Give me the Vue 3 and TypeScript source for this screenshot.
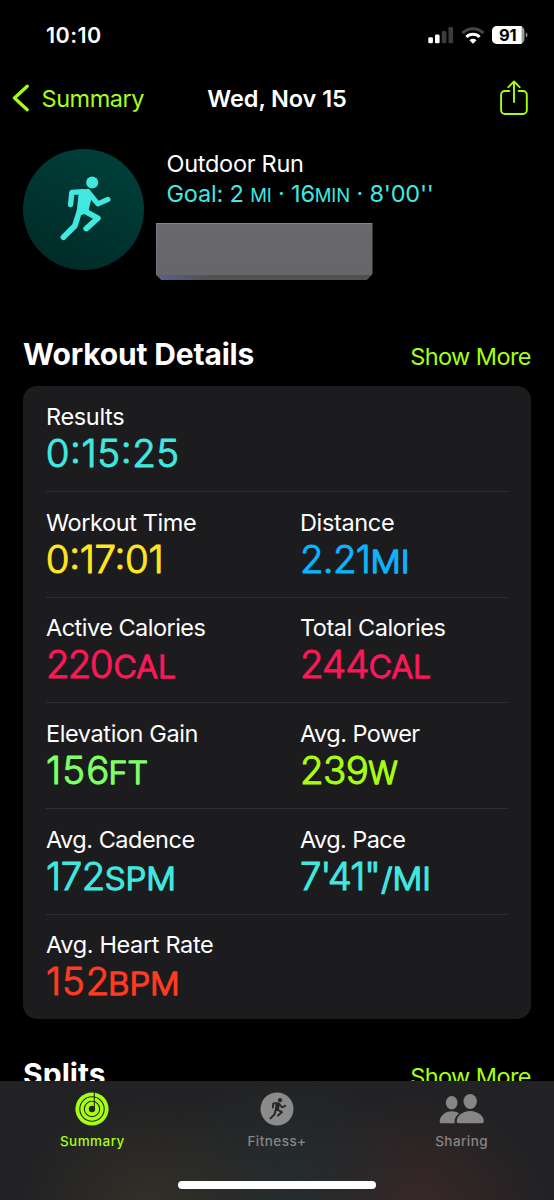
<script setup lang="ts">
interface Metric {
  label: string
  num: string
  numX: number
  numLen: number
  unit?: string
  unitX?: number
  unitLen?: number
  color: string
  spacing: number
}

const rows: Metric[][] = [
  [{ label: 'Results', num: '0:15:25', numX: -0.3, numLen: 133.5, color: '#40e8e0', spacing: -0.35 }],
  [
    { label: 'Workout Time', num: '0:17:01', numX: -0.3, numLen: 118, color: '#ffe620', spacing: -0.4 },
    { label: 'Distance', num: '2.21', numX: 0, numLen: 71, unit: 'MI', unitX: 70.5, unitLen: 39, color: '#0ab4ff', spacing: -0.35 },
  ],
  [
    { label: 'Active Calories', num: '220', numX: 0, numLen: 67.5, unit: 'CAL', unitX: 67.5, unitLen: 62.5, color: '#fa1858', spacing: -0.52 },
    { label: 'Total Calories', num: '244', numX: 0, numLen: 69.5, unit: 'CAL', unitX: 68.7, unitLen: 62.3, color: '#fa1858', spacing: -0.46 },
  ],
  [
    { label: 'Elevation Gain', num: '156', numX: 0, numLen: 63.5, unit: 'FT', unitX: 62.5, unitLen: 39.5, color: '#80ff68', spacing: -0.4 },
    { label: 'Avg. Power', num: '239', numX: 0, numLen: 69, unit: 'W', unitX: 68.3, unitLen: 29.5, color: '#a6ff10', spacing: -0.54 },
  ],
  [
    { label: 'Avg. Cadence', num: '172', numX: 0, numLen: 59.5, unit: 'SPM', unitX: 58.7, unitLen: 71.3, color: '#40e8e0', spacing: -0.5 },
    { label: 'Avg. Pace', num: '7\'41"', numX: 0, numLen: 81, unit: '/MI', unitX: 81, unitLen: 50, color: '#40e8e0', spacing: -0.58 },
  ],
  [{ label: 'Avg. Heart Rate', num: '152', numX: 0, numLen: 63.5, unit: 'BPM', unitX: 62, unitLen: 71.8, color: '#ff3b20', spacing: -0.35 }],
]
</script>

<template>
  <div class="screen">
    <header class="status">
      <span class="clock">10:10</span>
      <div class="indicators">
        <svg class="signal" viewBox="0 0 26 17" width="26" height="17">
          <rect x="0.3" y="10.2" width="4.6" height="6.1" rx="1.3" fill="#fff" />
          <rect x="7" y="7.6" width="4.6" height="8.7" rx="1.3" fill="#fff" />
          <rect x="13.8" y="4" width="4.6" height="12.3" rx="1.3" fill="#3c3c3c" />
          <rect x="20.5" y="0" width="4.6" height="16.3" rx="1.3" fill="#3c3c3c" />
        </svg>
        <svg class="wifi" viewBox="0 0 24 17" width="24" height="17" fill="none" stroke-width="3.1">
          <path d="M1.5 6.1a15 15 0 0 1 21 0" stroke="#444" />
          <path d="M5.4 10a9.4 9.4 0 0 1 13.2 0" stroke="#fff" />
          <path d="M12 16.8l-3.5-3.5a5 5 0 0 1 7 0z" fill="#fff" />
        </svg>
        <svg class="battery" viewBox="0 0 36 18" width="36" height="18">
          <rect x="0" y="0" width="32.5" height="18" rx="5" fill="#999" />
          <path d="M5 0H29.6V18H5a5 5 0 0 1-5-5V5a5 5 0 0 1 5-5z" fill="#fff" />
          <path d="M33.8 6.5c2.2.8 2.2 4.2 0 5z" fill="#999" />
          <text x="15.7" y="14.8" text-anchor="middle" class="battery-text">91</text>
        </svg>
      </div>
    </header>

    <nav class="nav">
      <div class="back">
        <svg viewBox="0 0 18 28" width="18" height="28">
          <path d="M15.2 2.2L2.5 14l12.7 11.7" fill="none" stroke="#a6ff10" stroke-width="3.3" stroke-linecap="round" stroke-linejoin="round" />
        </svg>
        <span>Summary</span>
      </div>
      <h1>Wed, Nov 15</h1>
      <svg class="share" viewBox="0 0 28 36" width="28" height="36" fill="none" stroke="#a6ff10" stroke-width="1.9" stroke-linecap="round" stroke-linejoin="round">
        <path d="M9.3 11H4.8a3.7 3.7 0 0 0-3.7 3.7v15.6A3.7 3.7 0 0 0 4.8 34h18.3a3.7 3.7 0 0 0 3.7-3.7V14.7a3.7 3.7 0 0 0-3.7-3.7H18.6" />
        <path d="M14 22V1.5M8.3 7.2L14 1.5l5.7 5.7" />
      </svg>
    </nav>

    <section class="workout">
      <svg class="avatar" viewBox="69 43 362 362" width="121" height="121">
        <defs>
          <linearGradient id="disc" x1="0.8" y1="0" x2="0.3" y2="1">
            <stop offset="0" stop-color="#00403b" />
            <stop offset="1" stop-color="#002b28" />
          </linearGradient>
        </defs>
        <circle cx="250" cy="224" r="181" fill="url(#disc)" />
        <g fill="none" stroke="#40e8e0" stroke-linecap="round" stroke-linejoin="round">
          <circle cx="276" cy="143" r="18" fill="#40e8e0" stroke="none" />
          <path d="M211.5 209L215 173l35-2" stroke-width="16" />
          <path d="M266 174l27 33 30-13" stroke-width="15.5" />
          <path d="M252 228l41 22-35 31" stroke-width="17" />
          <path d="M237 232l-13 41-34 34" stroke-width="17" />
          <path d="M243 171l21-1 3 18-9 40-22 8z" stroke-width="14" fill="#40e8e0" />
        </g>
      </svg>
      <div class="workout-info">
        <h2>Outdoor Run</h2>
        <p class="goal">Goal: 2 <small>MI</small> · 16<small>MIN</small> · 8'00''</p>
        <div class="redacted"></div>
      </div>
    </section>

    <div class="section-head">
      <h3>Workout Details</h3>
      <span class="more">Show More</span>
    </div>

    <section class="card">
      <div v-for="(row, i) in rows" :key="i" class="row">
        <div v-for="m in row" :key="m.label" class="metric">
          <span class="label" :style="{ letterSpacing: m.spacing + 'px' }">{{ m.label }}</span>
          <svg class="value" width="208" height="44" viewBox="0 0 208 44" :fill="m.color" :stroke="m.color">
            <text class="num" :x="m.numX" y="36" :textLength="m.numLen">{{ m.num }}</text>
            <text v-if="m.unit" class="unit" :x="m.unitX" y="36" :textLength="m.unitLen" lengthAdjust="spacingAndGlyphs">{{ m.unit }}</text>
          </svg>
        </div>
      </div>
    </section>

    <div class="section-head splits">
      <h3>Splits</h3>
      <span class="more">Show More</span>
    </div>

    <footer class="tabbar">
      <div class="tab active">
        <svg viewBox="0 0 34 34" width="34" height="34" fill="none">
          <circle cx="17" cy="17" r="16.6" fill="#a6ff10" />
          <g stroke="#25271f" stroke-width="1.1">
            <circle cx="17" cy="17" r="12.2" />
            <circle cx="17" cy="17" r="7.7" />
          </g>
          <circle cx="17" cy="17" r="3.2" fill="#25271f" />
          <path d="M19.3 0V16" stroke="#25271f" stroke-width="1.1" />
        </svg>
        <span>Summary</span>
      </div>
      <div class="tab">
        <svg viewBox="0 0 34 34" width="34" height="34" fill="none">
          <circle cx="17" cy="17" r="16.5" fill="#8b8b8c" />
          <g transform="translate(-10.6 -7.7) scale(0.111)" stroke="#252728" stroke-linecap="round" stroke-linejoin="round">
            <circle cx="276" cy="143" r="19" fill="#252728" stroke="none" />
            <path d="M211.5 209L215 173l35-2" stroke-width="17" />
            <path d="M266 174l27 33 30-13" stroke-width="17" />
            <path d="M252 228l41 22-35 31" stroke-width="18" />
            <path d="M237 232l-13 41-34 34" stroke-width="18" />
            <path d="M243 171l21-1 3 18-9 40-22 8z" stroke-width="14" fill="#252728" />
          </g>
        </svg>
        <span>Fitness+</span>
      </div>
      <div class="tab">
        <svg viewBox="0 0 46 34" width="46" height="34" fill="#868687">
          <ellipse cx="12.7" cy="10.8" rx="5.9" ry="6.7" />
          <ellipse cx="31.2" cy="9.5" rx="6.7" ry="7.4" />
          <path d="M.7 29.5C.7 24.2 6 19.2 12.7 19.2c3 0 5.4.9 7.3 2.3-2.9 2.2-4.5 5.3-4.5 8.1 0 .8.2 1.3.5 1.7H2.3C1.2 31.3.7 30.700.7 29.500z" />
          <path d="M17.7 29.3c0-5 5.6-10.2 13.5-10.2s13.6 5.2 13.6 10.2c0 1.3-.6 2-1.900 2H19.600c-1.300 0-1.900-.7-1.900-2z" />
        </svg>
        <span>Sharing</span>
      </div>
      <div class="home"></div>
    </footer>
  </div>
</template>

<style>
body {
  margin: 0;
  background: #000;
}
</style>

<style scoped>
.screen {
  position: relative;
  display: flex;
  flex-direction: column;
  width: 554px;
  height: 1200px;
  overflow: hidden;
  background: #000;
  color: #fff;
  font-family: Inter, "Liberation Sans", sans-serif;
}
h1, h2, h3, p {
  margin: 0;
}
svg {
  display: block;
  flex: none;
}
.status {
  display: flex;
  justify-content: space-between;
  align-items: center;
  height: 70px;
  padding: 0 26px 0 46px;
}
.clock {
  font-size: 21.5px;
  font-weight: 600;
  letter-spacing: 0.45px;
}
.indicators {
  display: flex;
  align-items: center;
}
.wifi {
  margin: 0 7px;
}
.battery-text {
  font-size: 16.5px;
  font-weight: 700;
  fill: #000;
  letter-spacing: -0.2px;
}
.nav {
  display: grid;
  grid-template-columns: 1fr auto 1fr;
  align-items: center;
  height: 56px;
}
.back {
  display: flex;
  align-items: center;
  gap: 11.5px;
  margin-left: 12px;
  color: #a6ff10;
  font-size: 23.5px;
  letter-spacing: -0.45px;
}
.nav h1 {
  font-size: 23.5px;
  font-weight: 600;
  letter-spacing: -0.1px;
}
.share {
  justify-self: end;
  margin-right: 26px;
}
.workout {
  display: flex;
  height: 204px;
  padding: 23px 0 0 23px;
  box-sizing: border-box;
}
.workout-info {
  padding-left: 22.5px;
}
.workout-info h2 {
  font-size: 23.5px;
  font-weight: 400;
  line-height: 30px;
  letter-spacing: -0.28px;
}
.goal {
  color: #40e8e0;
  font-size: 23.5px;
  line-height: 29px;
  letter-spacing: -0.17px;
  white-space: nowrap;
}
.goal small {
  font-size: 18.5px;
}
.redacted {
  width: 217px;
  height: 57px;
  margin: 13px 0 0 -11px;
  box-sizing: border-box;
  border-top: 1px solid #858587;
  border-left: 1px solid #77778c;
  background:
    linear-gradient(90deg, #59618f 0, rgba(80, 80, 84, 0) 25%) 0 100% / 100% 5px no-repeat,
    linear-gradient(#505052, #505052) 0 100% / 100% 5px no-repeat,
    linear-gradient(#69696b, #666668);
  clip-path: polygon(0 0, 100% 0, 100% 51px, calc(100% - 6px) 100%, 6px 100%, 0 51px);
}
.section-head {
  display: flex;
  justify-content: space-between;
  align-items: baseline;
  height: 55.5px;
  padding: 6px 23px 0;
  box-sizing: border-box;
}
.section-head h3 {
  font-size: 30px;
  font-weight: 700;
  line-height: 36px;
  letter-spacing: -0.17px;
}
.section-head.splits h3 {
  letter-spacing: 0.05px;
}
.more {
  color: #a6ff10;
  font-size: 23.5px;
  letter-spacing: -0.57px;
}
.card {
  margin: 0 23px;
  border-radius: 14px;
  background: #1c1c1e;
}
.row {
  display: grid;
  grid-template-columns: 254px 208px;
  height: 105.65px;
  margin: 0 23px;
  padding-top: 17.5px;
  box-sizing: border-box;
}
.row + .row {
  border-top: 1px solid #2f2f31;
  padding-top: 16.7px;
}
.label {
  display: block;
  height: 28px;
  line-height: 28px;
  font-size: 23.5px;
  white-space: nowrap;
}
.value {
  overflow: visible;
  stroke-linejoin: round;
}
.num {
  font-size: 38.5px;
  font-weight: 300;
  stroke-width: 1px;
}
.unit {
  font-size: 30.5px;
  font-weight: 300;
  stroke-width: 1.3px;
}
.splits {
  margin-top: 30.5px;
}
.tabbar {
  position: absolute;
  left: 0;
  top: 1081px;
  width: 554px;
  height: 119px;
  display: grid;
  grid-template-columns: repeat(3, 184.667px);
  background:
    radial-gradient(ellipse 130px 110px at 150px 125px, rgba(54, 51, 40, 0.8), transparent),
    radial-gradient(ellipse 130px 110px at 285px 100px, rgba(38, 46, 48, 0.9), transparent),
    radial-gradient(ellipse 130px 110px at 415px 125px, rgba(62, 40, 40, 0.85), transparent),
    #222224;
}
.tab {
  display: flex;
  flex-direction: column;
  align-items: center;
  padding-top: 10.5px;
  color: #868687;
  font-size: 13.5px;
  font-weight: 500;
}
.tab span {
  margin-top: 7px;
  line-height: 17px;
  letter-spacing: 0.45px;
}
.tab.active {
  color: #a6ff10;
}
.home {
  position: absolute;
  left: 178px;
  top: 100px;
  width: 198px;
  height: 7.5px;
  border-radius: 4px;
  background: #fff;
}
</style>
